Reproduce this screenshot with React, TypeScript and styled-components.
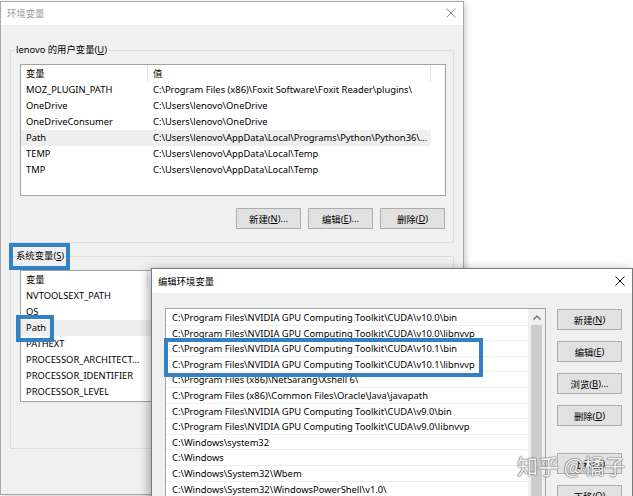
import styled, { createGlobalStyle } from "styled-components";

const GlobalStyle = createGlobalStyle`
  html, body {
    margin: 0;
    padding: 0;
    background: #ffffff;
  }
  body {
    font-family: "Noto Sans", "Noto Sans CJK SC", sans-serif;
    font-size: 9.35px;
    color: #000000;
  }
`;

const userVars = [
  ["MOZ_PLUGIN_PATH", "C:\\Program Files (x86)\\Foxit Software\\Foxit Reader\\plugins\\"],
  ["OneDrive", "C:\\Users\\lenovo\\OneDrive"],
  ["OneDriveConsumer", "C:\\Users\\lenovo\\OneDrive"],
  ["Path", "C:\\Users\\lenovo\\AppData\\Local\\Programs\\Python\\Python36\\..."],
  ["TEMP", "C:\\Users\\lenovo\\AppData\\Local\\Temp"],
  ["TMP", "C:\\Users\\lenovo\\AppData\\Local\\Temp"],
];

const systemVars = [
  ["NVTOOLSEXT_PATH", "C:\\Program Files\\NVIDIA Corporation\\NvToolsExt\\"],
  ["OS", "Windows_NT"],
  ["Path", "C:\\Program Files\\NVIDIA GPU Computing Toolkit\\CUDA\\v10.0\\bin;..."],
  ["PATHEXT", ".COM;.EXE;.BAT;.CMD;.VBS;.VBE;.JS;.JSE;.WSF;.WSH;.MSC"],
  ["PROCESSOR_ARCHITECT...", "AMD64"],
  ["PROCESSOR_IDENTIFIER", "Intel64 Family 6 Model 158 Stepping 9, GenuineIntel"],
  ["PROCESSOR_LEVEL", "6"],
];

const pathEntries = [
  "C:\\Program Files\\NVIDIA GPU Computing Toolkit\\CUDA\\v10.0\\bin",
  "C:\\Program Files\\NVIDIA GPU Computing Toolkit\\CUDA\\v10.0\\libnvvp",
  "C:\\Program Files\\NVIDIA GPU Computing Toolkit\\CUDA\\v10.1\\bin",
  "C:\\Program Files\\NVIDIA GPU Computing Toolkit\\CUDA\\v10.1\\libnvvp",
  "C:\\Program Files (x86)\\NetSarang\\Xshell 6\\",
  "C:\\Program Files (x86)\\Common Files\\Oracle\\Java\\javapath",
  "C:\\Program Files\\NVIDIA GPU Computing Toolkit\\CUDA\\v9.0\\bin",
  "C:\\Program Files\\NVIDIA GPU Computing Toolkit\\CUDA\\v9.0\\libnvvp",
  "C:\\Windows\\system32",
  "C:\\Windows",
  "C:\\Windows\\System32\\Wbem",
  "C:\\Windows\\System32\\WindowsPowerShell\\v1.0\\",
];

const CloseIcon = ({ color }: { color: string }) => (
  <svg width="10" height="10" viewBox="0 0 10 10">
    <path d="M0.5 0.5 L9.5 9.5 M9.5 0.5 L0.5 9.5" stroke={color} strokeWidth="1" fill="none" />
  </svg>
);

const UpArrow = () => (
  <svg width="8" height="5" viewBox="0 0 8 5">
    <path d="M0.5 4.5 L4 1 L7.5 4.5" stroke="#606060" strokeWidth="1.2" fill="none" />
  </svg>
);

const VarList = ({ rows, selected, marked }: { rows: string[][]; selected: string; marked?: boolean }) => (
  <ListView>
    <HeaderRow>
      <HeaderCell $width={127}>变量</HeaderCell>
      <HeaderCell $width={283}>值</HeaderCell>
    </HeaderRow>
    {rows.map(([name, value]) => (
      <Row key={name} $selected={name === selected}>
        <Cell $width={127}>
          {marked && name === selected ? <Marked $inset="-5px -8px -6px -10px">{name}</Marked> : name}
        </Cell>
        <Cell $width={283}>{value}</Cell>
      </Row>
    ))}
  </ListView>
);

const ActionButtons = () => (
  <ButtonRow>
    <Button>新建(<u>N</u>)...</Button>
    <Button>编辑(<u>E</u>)...</Button>
    <Button>删除(<u>D</u>)</Button>
  </ButtonRow>
);

export default function App() {
  return (
    <>
      <GlobalStyle />
      <Desktop>
        <Window $left={0} $top={1} $width={464} $height={494}>
          <TitleBar $height={23}>
            <Title $active={false}>环境变量</Title>
            <CloseIcon color="#8a8a8a" />
          </TitleBar>
          <Body>
            <GroupBox $gap={17}>
              <Legend>lenovo 的用户变量(<u>U</u>)</Legend>
              <VarList rows={userVars} selected="Path" />
              <ActionButtons />
            </GroupBox>
            <GroupBox $gap={5}>
              <Legend>
                <Marked $inset="-5px -6px -6px -7px">系统变量(<u>S</u>)</Marked>
              </Legend>
              <VarList rows={systemVars} selected="Path" marked />
              <ActionButtons />
            </GroupBox>
          </Body>
        </Window>

        <Window $left={151} $top={268} $width={482} $height={260} $active>
          <TitleBar $height={24}>
            <Title $active>编辑环境变量</Title>
            <CloseIcon color="#111111" />
          </TitleBar>
          <EditBody>
            <ListBox>
              <EntryList>
                {pathEntries.slice(0, 2).map((p) => (
                  <Entry key={p}>{p}</Entry>
                ))}
                <Marked $inset="-3px 45px -5px -2px">
                  {pathEntries.slice(2, 4).map((p) => (
                    <Entry key={p}>{p}</Entry>
                  ))}
                </Marked>
                {pathEntries.slice(4).map((p) => (
                  <Entry key={p}>{p}</Entry>
                ))}
              </EntryList>
              <ScrollBar>
                <ScrollArrow>
                  <UpArrow />
                </ScrollArrow>
                <Thumb />
              </ScrollBar>
            </ListBox>
            <ButtonColumn>
              <Button>新建(<u>N</u>)</Button>
              <Button>编辑(<u>E</u>)</Button>
              <Button>浏览(<u>B</u>)...</Button>
              <Button>删除(<u>D</u>)</Button>
              <Button $spaced>上移(<u>U</u>)</Button>
              <Button>下移(<u>O</u>)</Button>
            </ButtonColumn>
          </EditBody>
        </Window>

        <Watermark>知乎 @橘子</Watermark>
      </Desktop>
    </>
  );
}

const Desktop = styled.div`
  position: relative;
  width: 633px;
  height: 496px;
  overflow: hidden;
  background: #ffffff;
`;

const Window = styled.div<{ $left: number; $top: number; $width: number; $height: number; $active?: boolean }>`
  position: absolute;
  left: ${(p) => p.$left}px;
  top: ${(p) => p.$top}px;
  width: ${(p) => p.$width}px;
  height: ${(p) => p.$height}px;
  box-sizing: border-box;
  border: 1px solid ${(p) => (p.$active ? "#7a7a7a" : "#a8a8a8")};
  background: #f0f0f0;
  box-shadow: ${(p) => (p.$active ? "-2px 2px 10px rgba(0, 0, 0, 0.35)" : "2px 2px 6px rgba(0, 0, 0, 0.2)")};
  display: flex;
  flex-direction: column;
`;

const TitleBar = styled.div<{ $height: number }>`
  height: ${(p) => p.$height}px;
  flex: none;
  background: #ffffff;
  display: flex;
  align-items: center;
  justify-content: space-between;
  padding: 0 7px 1px 6px;
  box-sizing: border-box;
`;

const Title = styled.span<{ $active: boolean }>`
  color: ${(p) => (p.$active ? "#000000" : "#9a9a9a")};
`;

const Body = styled.div`
  display: flex;
  flex-direction: column;
  padding: 0 9px;
`;

const GroupBox = styled.fieldset<{ $gap: number }>`
  margin: ${(p) => p.$gap}px 0 0;
  padding: 6px 7px 13px 9px;
  border: 1px solid #dcdcdc;
  min-width: 0;
`;

const Legend = styled.legend`
  margin-left: -5px;
  padding: 0 1px;
  line-height: 16px;
  height: 16px;
`;

const Marked = styled.span<{ $inset: string }>`
  position: relative;
  display: inline-block;

  &::after {
    content: "";
    position: absolute;
    inset: ${(p) => p.$inset};
    border: 4px solid #3182c4;
    pointer-events: none;
  }
`;

const ListView = styled.div`
  height: 132px;
  box-sizing: border-box;
  border: 1px solid #a3a3a3;
  background: #ffffff;
`;

const HeaderRow = styled.div`
  display: flex;
  height: 17px;
`;

const HeaderCell = styled.div<{ $width: number }>`
  width: ${(p) => p.$width}px;
  flex: none;
  box-sizing: border-box;
  padding-left: 5px;
  line-height: 17px;
  border-right: 1px solid #e5e5e5;
`;

const Row = styled.div<{ $selected: boolean }>`
  display: flex;
  width: 410px;
  height: 16px;
  background: ${(p) => (p.$selected ? "#efefef" : "transparent")};
`;

const Cell = styled.div<{ $width: number }>`
  width: ${(p) => p.$width}px;
  flex: none;
  box-sizing: border-box;
  padding-left: 5px;
  line-height: 16px;
  white-space: nowrap;
`;

const ButtonRow = styled.div`
  display: flex;
  justify-content: flex-end;
  gap: 7px;
  margin-top: 12px;
  padding-right: 1px;
`;

const Button = styled.div<{ $spaced?: boolean }>`
  width: 65px;
  height: 21px;
  flex: none;
  box-sizing: border-box;
  margin-top: ${(p) => (p.$spaced ? "16px" : "0")};
  border: 1px solid #adadad;
  background: #e1e1e1;
  display: flex;
  align-items: center;
  justify-content: center;
  white-space: nowrap;
`;

const EditBody = styled.div`
  display: flex;
  gap: 11px;
  padding: 15px 10px 0 13px;
`;

const ListBox = styled.div`
  width: 381px;
  height: 260px;
  flex: none;
  box-sizing: border-box;
  border: 1px solid #a3a3a3;
  background: #ffffff;
  display: flex;
`;

const EntryList = styled.div`
  flex: 1;
  display: flex;
  flex-direction: column;
  padding-top: 1px;
`;

const Entry = styled.div`
  height: 15.6px;
  box-sizing: border-box;
  padding-left: 6px;
  line-height: 15px;
  border-bottom: 1px solid #efefef;
  white-space: nowrap;
`;

const ScrollBar = styled.div`
  width: 17px;
  flex: none;
  background: #f0f0f0;
  display: flex;
  flex-direction: column;
  align-items: center;
`;

const ScrollArrow = styled.div`
  height: 16px;
  display: flex;
  align-items: center;
  justify-content: center;
`;

const Thumb = styled.div`
  width: 11px;
  flex: 1;
  background: #cdcdcd;
`;

const ButtonColumn = styled.div`
  display: flex;
  flex-direction: column;
  gap: 11px;
  margin-top: 1px;
`;

const Watermark = styled.div`
  position: absolute;
  left: 517px;
  top: 451px;
  font-family: "Noto Sans CJK SC", sans-serif;
  font-size: 21px;
  line-height: 28px;
  color: rgba(255, 255, 255, 0.92);
  text-shadow: 0 0 1px #6a6a6a, 0 0 1px #6a6a6a, 0 0 2px rgba(0, 0, 0, 0.4);
  white-space: nowrap;
`;
